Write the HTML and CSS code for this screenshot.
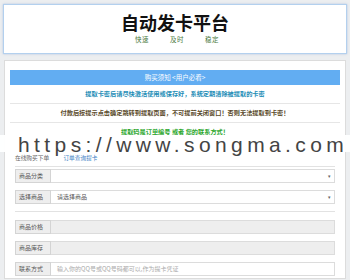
FILE: index.html
```html
<!DOCTYPE html>
<html lang="zh-CN">
<head>
    <meta charset="UTF-8">
    <meta name="viewport" content="width=device-width, initial-scale=1.0">
    <title>自动发卡平台</title>
    <link rel="stylesheet" href="styles.css">
</head>
<body>
    <div class="header">
        <h1>自动发卡平台</h1>
        <div class="slogan">快速<span>及时</span><span>稳定</span></div>
    </div>

    <div class="main">
        <div class="notice-head">购买须知 &lt;用户必看&gt;</div>
        <div class="notice blue">提取卡密后请尽快激活使用或保存好，系统定期清除被提取的卡密</div>
        <div class="notice dark">付款后按提示点击确定跳转到提取页面，不可提前关闭窗口！否则无法提取到卡密！</div>
        <div class="notice green">提取码是订单编号 或者 您的联系方式！</div>

        <div class="tabs">
            <span class="tab">在线购买下单</span>
            <span class="tab active">订单查询提卡</span>
        </div>

        <form class="order-form">
            <div class="field">
                <label>商品分类</label>
                <div class="select"></div>
            </div>
            <div class="field">
                <label>选择商品</label>
                <div class="select">请选择商品</div>
            </div>
            <div class="divider"></div>
            <div class="field">
                <label>商品价格</label>
                <div class="box readonly"></div>
            </div>
            <div class="field">
                <label>商品库存</label>
                <div class="box readonly"></div>
            </div>
            <div class="field">
                <label>联系方式</label>
                <div class="box placeholder">输入你的QQ号或QQ号码都可以,作为提卡凭证</div>
            </div>
        </form>
    </div>

    <div class="watermark">https://www.songma.com</div>
</body>
</html>
```

FILE: styles.css
```css
body {
    margin: 0;
    padding: 4px 3px 0;
    background-color: #eceef0;
    font-family: "Noto Sans CJK SC", "Noto Sans", sans-serif;
    position: relative;
    height: 276px;
    overflow: hidden;
}
.header {
    background: white;
    border: 1px solid #b3d0ee;
    box-shadow: 0 0 2px rgba(120, 160, 210, 0.5);
    height: 48px;
    text-align: center;
}
h1 {
    margin: 0;
    padding-top: 6px;
    font-size: 18px;
    line-height: 22px;
    font-weight: bold;
    color: #111;
}
.slogan {
    font-size: 6.5px;
    line-height: 12px;
    color: #4a7a40;
    letter-spacing: 0.5px;
    padding-left: 4px;
}
.slogan span {
    margin-left: 21px;
}
.main {
    margin: 6px 1px 0;
    background: white;
    border: 1px solid #dcdcdc;
    padding: 9px 5px 0;
    height: 208px;
}
.notice-head {
    background-color: #62adf2;
    color: white;
    font-size: 6.5px;
    line-height: 15px;
    text-align: center;
}
.notice {
    font-size: 6.2px;
    line-height: 18px;
    text-align: center;
    border-bottom: 1px solid #e6e6e6;
    font-weight: bold;
}
.blue { color: #1d8db6; }
.dark { color: #5a4a2a; }
.green { color: #2aa62a; border-bottom: none; }
.tabs {
    margin: 13px 5px 0;
    padding-bottom: 4px;
    border-bottom: 1px solid #e2e2e2;
    font-size: 5.7px;
    line-height: 8px;
}
.tab {
    color: #666;
    margin-right: 13px;
}
.tab.active {
    color: #3b80c4;
}
.order-form {
    margin: 2px 5px 0;
    display: flex;
    flex-direction: column;
    gap: 7px;
}
.field {
    display: flex;
    height: 14px;
    font-size: 6px;
    line-height: 12px;
    color: #555;
}
.field label {
    width: 31px;
    border: 1px solid #d4d4d4;
    background: #eeeeee;
    padding-left: 3px;
}
.select, .box {
    flex: 1;
    border: 1px solid #dcdcdc;
    border-left: none;
    padding-left: 6px;
    position: relative;
}
.select::after {
    content: "▾";
    position: absolute;
    right: 3px;
    top: 0;
    font-size: 5px;
    color: #666;
}
.readonly {
    background: #eeeeee;
}
.placeholder {
    color: #aaa;
}
.divider {
    border-top: 1px solid #e2e2e2;
    margin: 0 0 1px;
}
.watermark {
    position: absolute;
    left: 0;
    right: 0;
    top: 135px;
    height: 17px;
    background: rgba(255, 255, 255, 0.95);
    font-family: "Liberation Sans", sans-serif;
    font-size: 21px;
    line-height: 20px;
    letter-spacing: 4.4px;
    color: #444;
    padding-left: 18px;
    white-space: nowrap;
}
```
